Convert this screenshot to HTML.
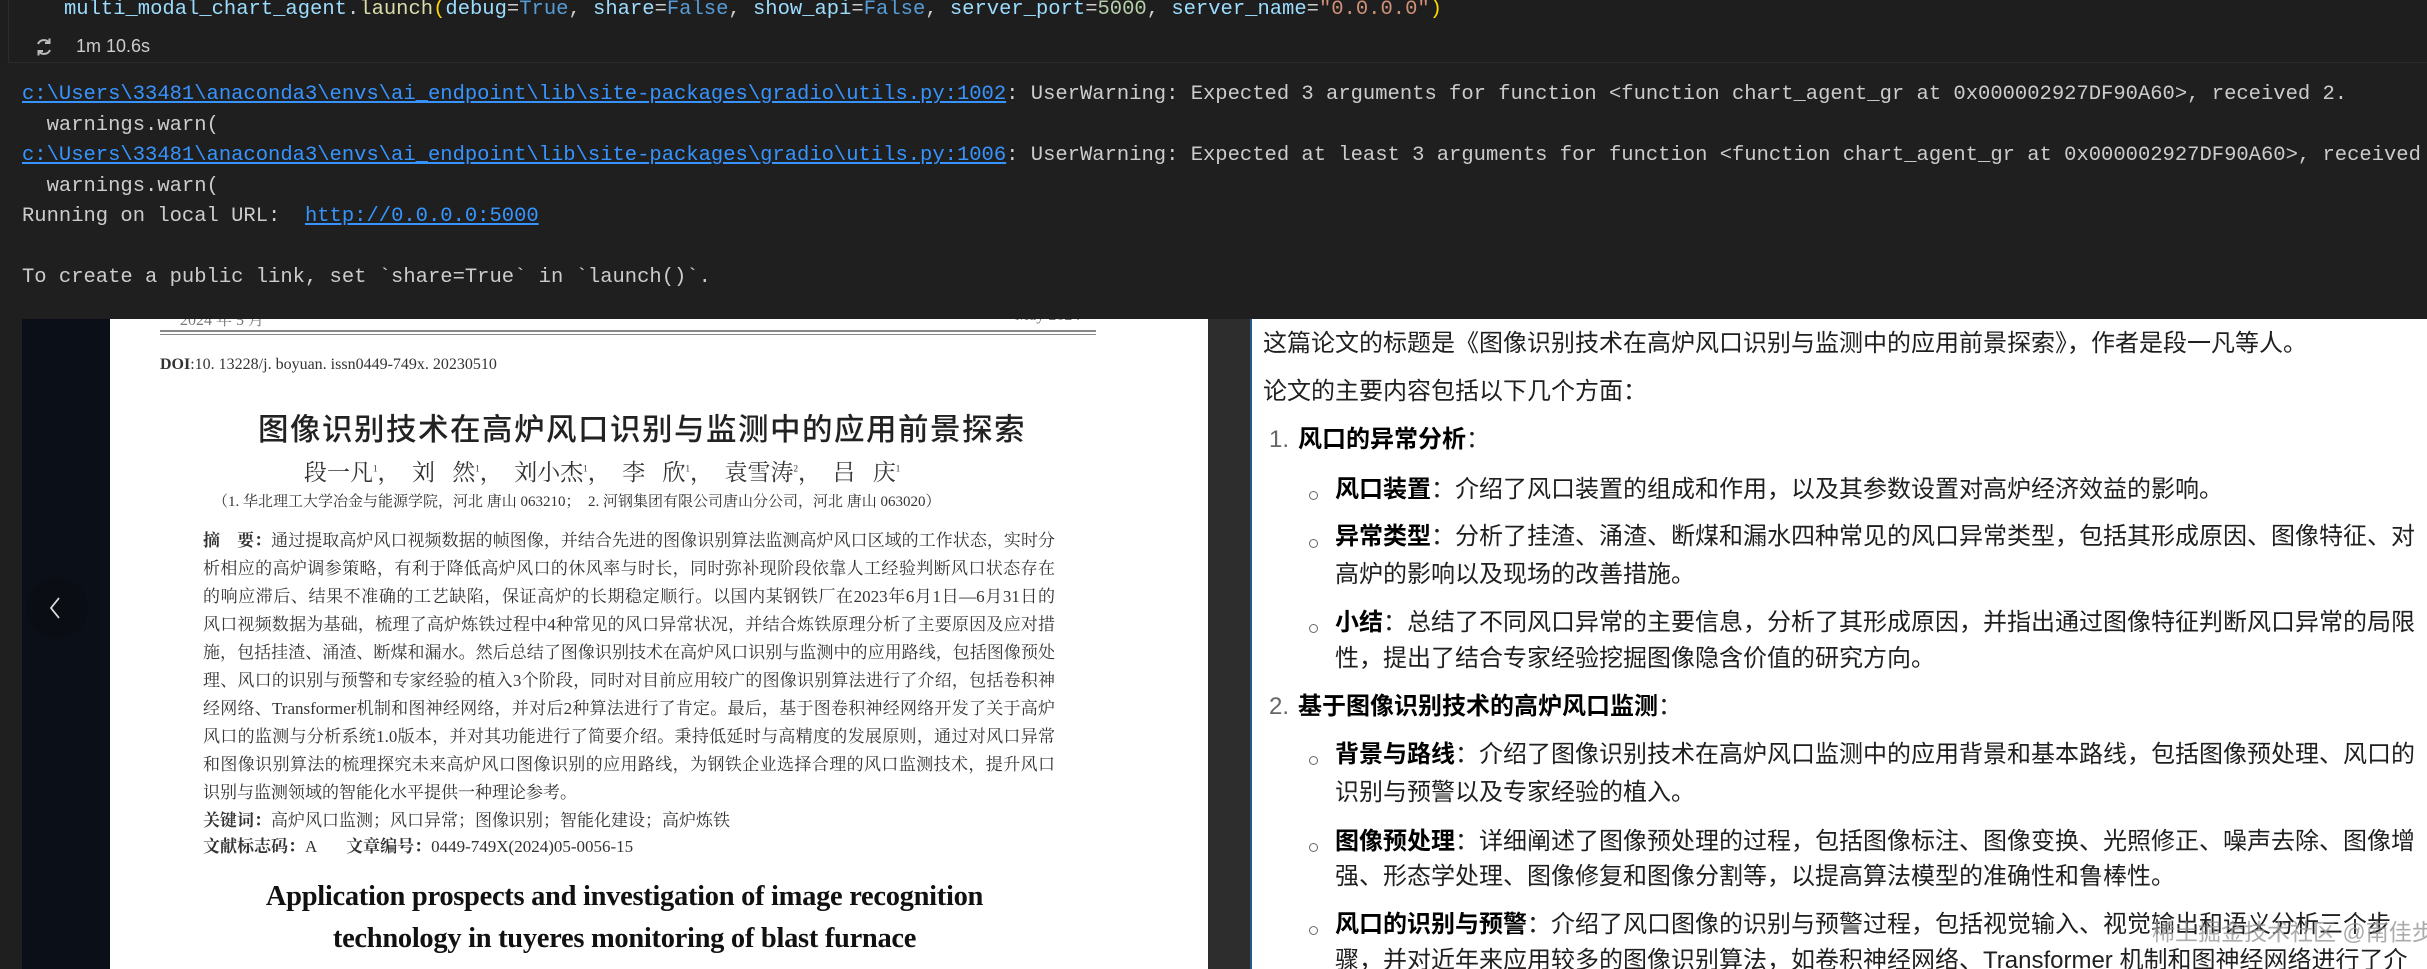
<!DOCTYPE html>
<html><head><meta charset="utf-8">
<style>
*{margin:0;padding:0;box-sizing:border-box}
body{width:2427px;height:969px;background:#1f1f1f;position:relative;overflow:hidden;font-family:"Liberation Mono",monospace}
.a{position:absolute;white-space:pre}
.m{font-family:"Liberation Mono",monospace;font-size:20.5px;color:#cccccc;line-height:30px}
.lnk{color:#3794ff;text-decoration:underline}
.cjk{font-family:"Liberation Serif","Noto Serif CJK SC",serif;color:#333}
.r{font-family:"Liberation Sans","Noto Sans CJK SC",sans-serif;color:#1f1f1f;font-size:24px;line-height:30px}
.r b{font-weight:700;color:#000}
.dot{position:absolute;width:9px;height:9px;border:1.5px solid #666;border-radius:50%}
.abs{font-size:17px;line-height:28px;width:852px;text-align:justify;text-align-last:justify;white-space:nowrap}
</style></head><body>
<div style="position:absolute;left:0;top:0;width:2427px;height:63px;background:#1e1e1e"></div>
<div style="position:absolute;left:8px;top:0;width:2419px;height:63px;border-left:1px solid #2b2b2b;border-bottom:1px solid #2b2b2b"></div>
<div class="a m" style="left:64px;top:-5px"><span style="color:#9cdcfe">multi_modal_chart_agent</span>.<span style="color:#dcdcaa">launch</span><span style="color:#ffd700">(</span><span style="color:#9cdcfe">debug</span>=<span style="color:#569cd6">True</span>, <span style="color:#9cdcfe">share</span>=<span style="color:#569cd6">False</span>, <span style="color:#9cdcfe">show_api</span>=<span style="color:#569cd6">False</span>, <span style="color:#9cdcfe">server_port</span>=<span style="color:#b5cea8">5000</span>, <span style="color:#9cdcfe">server_name</span>=<span style="color:#ce9178">"0.0.0.0"</span><span style="color:#ffd700">)</span></div>
<svg class="a" style="left:34px;top:37px" width="20" height="20" viewBox="0 0 20 20"><path d="M4 7a6.5 6.5 0 0 1 11-1.5M16 13a6.5 6.5 0 0 1-11 1.5" stroke="#bbb" stroke-width="2" fill="none"/><path d="M15.5 1.5v4.5h-4.5M4.5 18.5v-4.5h4.5" stroke="#bbb" stroke-width="2" fill="none"/></svg>
<div class="a" style="left:76px;top:36px;font-family:'Liberation Sans',sans-serif;font-size:18px;color:#ccc">1m 10.6s</div>

<div class="a m" style="left:22px;top:80px"><span class="lnk">c:\Users\33481\anaconda3\envs\ai_endpoint\lib\site-packages\gradio\utils.py:1002</span>: UserWarning: Expected 3 arguments for function &lt;function chart_agent_gr at 0x000002927DF90A60&gt;, received 2.</div>
<div class="a m" style="left:22px;top:111px">  warnings.warn(</div>
<div class="a m" style="left:22px;top:141px"><span class="lnk">c:\Users\33481\anaconda3\envs\ai_endpoint\lib\site-packages\gradio\utils.py:1006</span>: UserWarning: Expected at least 3 arguments for function &lt;function chart_agent_gr at 0x000002927DF90A60&gt;, received 2.</div>
<div class="a m" style="left:22px;top:172px">  warnings.warn(</div>
<div class="a m" style="left:22px;top:202px">Running on local URL:  <span class="lnk">http://0.0.0.0:5000</span></div>
<div class="a m" style="left:22px;top:263px">To create a public link, set `share=True` in `launch()`.</div>

<!-- left panel -->
<div style="position:absolute;left:22px;top:319px;width:1228px;height:650px;background:#0b0f18"></div>
<div style="position:absolute;left:1208px;top:319px;width:42px;height:650px;background:#2d2d2d"></div>
<div style="position:absolute;left:110px;top:319px;width:1098px;height:650px;background:#fff;overflow:hidden">
 <div class="a cjk" style="left:70px;top:-12px;font-size:16px;color:#777">2024 年 5 月</div>
 <div class="a cjk" style="left:905px;top:-12px;font-size:16px;color:#777">May 2024</div>
 <div style="position:absolute;left:50px;top:11px;width:936px;height:5px;border-top:2px solid #888;border-bottom:1px solid #888"></div>
 <div class="a cjk" style="left:50px;top:37px;font-size:16px"><b>DOI</b>:10. 13228/j. boyuan. issn0449-749x. 20230510</div>
 <div class="a" style="left:148px;top:86px;font-family:'Liberation Sans','Noto Sans CJK SC',sans-serif;font-size:30.5px;color:#222;font-weight:500;letter-spacing:1.5px">图像识别技术在高炉风口识别与监测中的应用前景探索</div>
 <div class="a cjk" style="left:194px;top:135px;font-size:23px;letter-spacing:0px">段一凡<sup style="font-size:9px">1</sup>，  刘   然<sup style="font-size:9px">1</sup>，  刘小杰<sup style="font-size:9px">1</sup>，  李   欣<sup style="font-size:9px">1</sup>，  袁雪涛<sup style="font-size:9px">2</sup>，  吕   庆<sup style="font-size:9px">1</sup></div>
 <div class="a cjk" style="left:103px;top:171px;font-size:15px">（1. 华北理工大学冶金与能源学院，河北 唐山 063210；  2. 河钢集团有限公司唐山分公司，河北 唐山 063020）</div>
 <div class="cjk" style="position:absolute;left:93px;top:208px">
  <div class="abs"><b>摘　要：</b>通过提取高炉风口视频数据的帧图像，并结合先进的图像识别算法监测高炉风口区域的工作状态，实时分</div>
  <div class="abs">析相应的高炉调参策略，有利于降低高炉风口的休风率与时长，同时弥补现阶段依靠人工经验判断风口状态存在</div>
  <div class="abs">的响应滞后、结果不准确的工艺缺陷，保证高炉的长期稳定顺行。以国内某钢铁厂在2023年6月1日—6月31日的</div>
  <div class="abs">风口视频数据为基础，梳理了高炉炼铁过程中4种常见的风口异常状况，并结合炼铁原理分析了主要原因及应对措</div>
  <div class="abs">施，包括挂渣、涌渣、断煤和漏水。然后总结了图像识别技术在高炉风口识别与监测中的应用路线，包括图像预处</div>
  <div class="abs">理、风口的识别与预警和专家经验的植入3个阶段，同时对目前应用较广的图像识别算法进行了介绍，包括卷积神</div>
  <div class="abs">经网络、Transformer机制和图神经网络，并对后2种算法进行了肯定。最后，基于图卷积神经网络开发了关于高炉</div>
  <div class="abs">风口的监测与分析系统1.0版本，并对其功能进行了简要介绍。秉持低延时与高精度的发展原则，通过对风口异常</div>
  <div class="abs">和图像识别算法的梳理探究未来高炉风口图像识别的应用路线，为钢铁企业选择合理的风口监测技术，提升风口</div>
  <div style="font-size:17px;line-height:28px">识别与监测领域的智能化水平提供一种理论参考。</div>
  <div style="font-size:17px;line-height:27px"><b>关键词：</b>高炉风口监测；风口异常；图像识别；智能化建设；高炉炼铁</div>
  <div style="font-size:17px;line-height:26px;white-space:pre"><b>文献标志码：</b>A       <b>文章编号：</b>0449-749X(2024)05-0056-15</div>
 </div>
 <div class="a" style="left:110px;top:557px;width:809px;text-align:center;font-family:'Liberation Serif',serif;font-weight:700;font-size:28.5px;line-height:42px;color:#111;letter-spacing:-0.3px;white-space:normal">Application prospects and investigation of image recognition<br>technology in tuyeres monitoring of blast furnace</div>
</div>
<div style="position:absolute;left:26px;top:577px;width:62px;height:62px;border-radius:50%;background:#0a0d14"></div>
<svg class="a" style="left:48px;top:596px" width="14" height="24"><path d="M11 2L3 12l8 10" stroke="#ddd" stroke-width="1.8" fill="none"/></svg>

<!-- right panel -->
<div style="position:absolute;left:1250px;top:319px;width:1177px;height:650px;background:#fff;border-left:2px solid #2a5a8a;overflow:hidden">
 <div class="a r" style="left:11px;top:10px">这篇论文的标题是《图像识别技术在高炉风口识别与监测中的应用前景探索》，作者是段一凡等人。</div>
 <div class="a r" style="left:11px;top:58px">论文的主要内容包括以下几个方面：</div>
 <div class="a r" style="left:17px;top:106px;color:#666">1.</div>
 <div class="a r" style="left:46px;top:106px"><b>风口的异常分析</b>：</div>
 <div class="dot" style="left:57px;top:172px"></div>
 <div class="a r" style="left:83px;top:156px"><b>风口装置</b>：介绍了风口装置的组成和作用，以及其参数设置对高炉经济效益的影响。</div>
 <div class="dot" style="left:57px;top:220px"></div>
 <div class="a r" style="left:83px;top:203px"><b>异常类型</b>：分析了挂渣、涌渣、断煤和漏水四种常见的风口异常类型，包括其形成原因、图像特征、对</div>
 <div class="a r" style="left:83px;top:241px">高炉的影响以及现场的改善措施。</div>
 <div class="dot" style="left:57px;top:305px"></div>
 <div class="a r" style="left:83px;top:289px"><b>小结</b>：总结了不同风口异常的主要信息，分析了其形成原因，并指出通过图像特征判断风口异常的局限</div>
 <div class="a r" style="left:83px;top:325px">性，提出了结合专家经验挖掘图像隐含价值的研究方向。</div>
 <div class="a r" style="left:17px;top:373px;color:#666">2.</div>
 <div class="a r" style="left:46px;top:373px"><b>基于图像识别技术的高炉风口监测</b>：</div>
 <div class="dot" style="left:57px;top:437px"></div>
 <div class="a r" style="left:83px;top:421px"><b>背景与路线</b>：介绍了图像识别技术在高炉风口监测中的应用背景和基本路线，包括图像预处理、风口的</div>
 <div class="a r" style="left:83px;top:459px">识别与预警以及专家经验的植入。</div>
 <div class="dot" style="left:57px;top:524px"></div>
 <div class="a r" style="left:83px;top:508px"><b>图像预处理</b>：详细阐述了图像预处理的过程，包括图像标注、图像变换、光照修正、噪声去除、图像增</div>
 <div class="a r" style="left:83px;top:543px">强、形态学处理、图像修复和图像分割等，以提高算法模型的准确性和鲁棒性。</div>
 <div class="dot" style="left:57px;top:607px"></div>
 <div class="a r" style="left:83px;top:591px"><b>风口的识别与预警</b>：介绍了风口图像的识别与预警过程，包括视觉输入、视觉输出和语义分析三个步</div>
 <div class="a r" style="left:83px;top:627px">骤，并对近年来应用较多的图像识别算法，如卷积神经网络、Transformer 机制和图神经网络进行了介</div>
 <div class="a" style="left:900px;top:594px;font-family:'Liberation Sans','Noto Sans CJK SC',sans-serif;font-size:23px;color:rgba(150,150,150,0.8)">稀土掘金技术社区 @南佳步_</div>
</div>
</body></html>
